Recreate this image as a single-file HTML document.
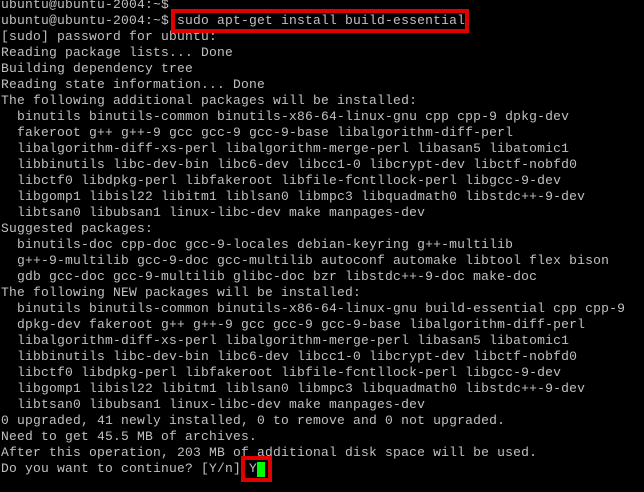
<!DOCTYPE html>
<html><head><style>
html,body{margin:0;padding:0;background:#000;width:644px;height:492px;overflow:hidden}
pre{position:absolute;left:1px;top:-3px;margin:0;font-family:"Liberation Mono",monospace;font-size:13px;line-height:16px;color:#c0c0c0;letter-spacing:0.2px}
.b1{position:absolute;left:171px;top:9px;width:290px;height:16px;border:4px solid #e00000}
.b2{position:absolute;left:241px;top:456px;width:23px;height:18px;border:4px solid #e00000}
.cur{position:absolute;left:257px;top:462px;width:8px;height:15px;background:#00ff00}
</style></head><body>
<pre>ubuntu@ubuntu-2004:~$
ubuntu@ubuntu-2004:~$ sudo apt-get install build-essential
[sudo] password for ubuntu:
Reading package lists... Done
Building dependency tree
Reading state information... Done
The following additional packages will be installed:
  binutils binutils-common binutils-x86-64-linux-gnu cpp cpp-9 dpkg-dev
  fakeroot g++ g++-9 gcc gcc-9 gcc-9-base libalgorithm-diff-perl
  libalgorithm-diff-xs-perl libalgorithm-merge-perl libasan5 libatomic1
  libbinutils libc-dev-bin libc6-dev libcc1-0 libcrypt-dev libctf-nobfd0
  libctf0 libdpkg-perl libfakeroot libfile-fcntllock-perl libgcc-9-dev
  libgomp1 libisl22 libitm1 liblsan0 libmpc3 libquadmath0 libstdc++-9-dev
  libtsan0 libubsan1 linux-libc-dev make manpages-dev
Suggested packages:
  binutils-doc cpp-doc gcc-9-locales debian-keyring g++-multilib
  g++-9-multilib gcc-9-doc gcc-multilib autoconf automake libtool flex bison
  gdb gcc-doc gcc-9-multilib glibc-doc bzr libstdc++-9-doc make-doc
The following NEW packages will be installed:
  binutils binutils-common binutils-x86-64-linux-gnu build-essential cpp cpp-9
  dpkg-dev fakeroot g++ g++-9 gcc gcc-9 gcc-9-base libalgorithm-diff-perl
  libalgorithm-diff-xs-perl libalgorithm-merge-perl libasan5 libatomic1
  libbinutils libc-dev-bin libc6-dev libcc1-0 libcrypt-dev libctf-nobfd0
  libctf0 libdpkg-perl libfakeroot libfile-fcntllock-perl libgcc-9-dev
  libgomp1 libisl22 libitm1 liblsan0 libmpc3 libquadmath0 libstdc++-9-dev
  libtsan0 libubsan1 linux-libc-dev make manpages-dev
0 upgraded, 41 newly installed, 0 to remove and 0 not upgraded.
Need to get 45.5 MB of archives.
After this operation, 203 MB of additional disk space will be used.
Do you want to continue? [Y/n] Y</pre>
<div class="b1"></div>
<div class="b2"></div>
<div class="cur"></div>
</body></html>
